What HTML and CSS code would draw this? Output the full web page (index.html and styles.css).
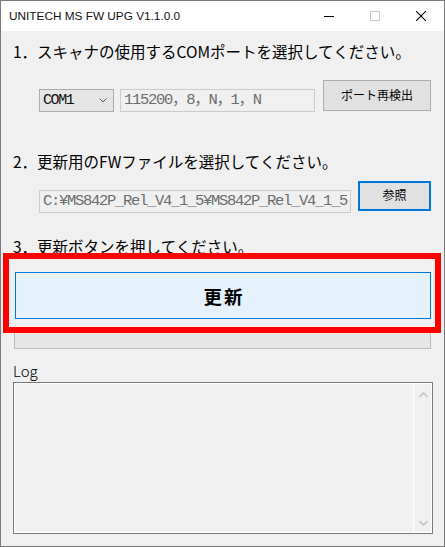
FILE: index.html
```html
<!DOCTYPE html>
<html lang="ja">
<head>
<meta charset="utf-8">
<title>UNITECH MS FW UPG V1.1.0.0</title>
<link rel="stylesheet" href="styles.css">
</head>
<body>
<div class="window">
  <div class="titlebar">
    <span class="title">UNITECH MS FW UPG V1.1.0.0</span>
    <div class="caption-btns">
      <div class="cap"><svg width="10" height="10" viewBox="0 0 10 10"><line x1="0" y1="5.5" x2="10" y2="5.5" stroke="#000" stroke-width="1"/></svg></div>
      <div class="cap"><svg width="10" height="10" viewBox="0 0 10 10"><rect x="0.5" y="0.5" width="9" height="9" fill="none" stroke="#cccccc" stroke-width="1"/></svg></div>
      <div class="cap"><svg width="10" height="10" viewBox="0 0 10 10"><path d="M0 0 L10 10 M10 0 L0 10" stroke="#000" stroke-width="1.1"/></svg></div>
    </div>
  </div>
  <div class="content">
    <p class="label l1">1．スキャナの使用するCOMポートを選択してください。</p>
    <div class="row row1">
      <div class="combo">
        <span class="combo-text">COM1</span>
        <svg class="combo-arrow" width="8" height="5" viewBox="0 0 8 5"><polyline points="0.5,0.5 4,4 7.5,0.5" fill="none" stroke="#606060" stroke-width="1"/></svg>
      </div>
      <div class="textbox tb-port">115200，8，N，1，N</div>
      <div class="btn btn-detect">ポート再検出</div>
    </div>
    <p class="label l2">2．更新用のFWファイルを選択してください。</p>
    <div class="row row2">
      <div class="textbox tb-file">C:¥MS842P_Rel_V4_1_5¥MS842P_Rel_V4_1_5</div>
      <div class="btn btn-browse">参照</div>
    </div>
    <p class="label l3">3．更新ボタンを押してください。</p>
    <div class="btn-update">更新</div>
    <div class="progress"></div>
    <div class="log-label">Log</div>
    <div class="log">
      <div class="log-area"></div>
      <div class="scroll">
        <svg width="9" height="6" viewBox="0 0 9 6"><polyline points="0.5,5 4.5,1 8.5,5" fill="none" stroke="#c4c4c4" stroke-width="1.6"/></svg>
        <svg width="9" height="6" viewBox="0 0 9 6"><polyline points="0.5,1 4.5,5 8.5,1" fill="none" stroke="#c4c4c4" stroke-width="1.6"/></svg>
      </div>
    </div>
  </div>
  <div class="highlight"></div>
</div>
</body>
</html>
```
FILE: styles.css
```css
html, body {
  margin: 0;
  padding: 0;
  background: #f0f0f0;
}
.window {
  position: relative;
  width: 445px;
  height: 547px;
  box-sizing: border-box;
  border: 1px solid #7a7a7a;
  background: #f0f0f0;
  display: flex;
  flex-direction: column;
  font-family: "Noto Sans CJK JP", sans-serif;
  color: #000;
}
.titlebar {
  height: 30px;
  background: #ffffff;
  display: flex;
  align-items: center;
  flex-shrink: 0;
}
.title {
  font-family: "Liberation Sans", Arial, sans-serif;
  font-size: 11.8px;
  font-weight: 400;
  padding-left: 8px;
  flex: 1;
  color: #111;
}
.caption-btns {
  display: flex;
  height: 30px;
}
.cap {
  width: 46px;
  height: 30px;
  display: flex;
  align-items: center;
  justify-content: center;
}
.cap svg { display: block; }
.content {
  padding: 10px 12px 0 12px;
  display: flex;
  flex-direction: column;
}
.label {
  margin: 0;
  font-size: 15.5px;
  line-height: 20px;
  height: 20px;
  white-space: nowrap;
}
.row {
  display: flex;
  align-items: flex-start;
}
.row1 { margin-top: 19px; padding-left: 26px; height: 32px; }
.l2 { margin-top: 39px; }
.row2 { margin-top: 10px; padding-left: 26px; height: 32px; }
.l3 { margin-top: 23px; }

.combo {
  width: 75px;
  height: 23px;
  margin-top: 9px;
  box-sizing: border-box;
  border: 1px solid #acacac;
  background: #e5e5e5;
  display: flex;
  align-items: center;
  justify-content: space-between;
  padding: 0 6px 0 3px;
}
.combo-text {
  font-family: "Liberation Mono", monospace;
  font-size: 15px;
  letter-spacing: -1.4px;
  line-height: 21px;
  color: #111;
}
.combo-arrow { display: block; }
.textbox {
  height: 23px;
  margin-top: 9px;
  box-sizing: border-box;
  border: 1px solid #cccccc;
  background: #f0f0f0;
  color: #6d6d6d;
  font-family: "Liberation Mono", "Noto Sans CJK JP", monospace;
  font-size: 15.5px;
  letter-spacing: -1.3px;
  line-height: 21px;
  padding-left: 3px;
  white-space: nowrap;
  overflow: hidden;
}
.tb-port { width: 195px; margin-left: 6px; }
.tb-file { width: 312px; }
.btn {
  box-sizing: border-box;
  background: #e1e1e1;
  display: flex;
  align-items: center;
  justify-content: center;
  font-size: 12px;
  white-space: nowrap;
}
.btn-detect {
  width: 108px;
  height: 31px;
  margin-left: 8px;
  border: 1px solid #adadad;
  padding-bottom: 2px;
}
.btn-browse {
  width: 73px;
  height: 30px;
  margin-left: 7px;
  border: 2px solid #0078d7;
  padding-bottom: 3px;
}
.btn-update {
  margin-top: 16px;
  margin-left: 2px;
  width: 416px;
  height: 47px;
  box-sizing: border-box;
  border: 1px solid #0078d7;
  background: #e5f1fb;
  display: flex;
  align-items: center;
  justify-content: center;
  font-size: 18.5px;
  font-weight: 700;
  letter-spacing: 2px;
  padding-left: 2px;
}
.progress {
  margin-top: 8px;
  margin-left: 1px;
  width: 417px;
  height: 22px;
  box-sizing: border-box;
  border: 1px solid #bcbcbc;
  background: #e6e6e6;
}
.log-label {
  margin-top: 12px;
  font-size: 15px;
  font-weight: 300;
  line-height: 20px;
  height: 20px;
}
.log {
  margin-top: 1px;
  width: 420px;
  height: 152px;
  box-sizing: border-box;
  border: 1px solid #7a7a7a;
  box-shadow: inset 0 0 0 1px #ffffff;
  background: #f0f0f0;
  display: flex;
}
.log-area { flex: 1; }
.scroll {
  width: 18px;
  border-left: 1px solid #ffffff;
  display: flex;
  flex-direction: column;
  align-items: center;
  justify-content: space-between;
  padding: 9px 0 7px 0;
}
.scroll svg { display: block; }
.highlight {
  position: absolute;
  left: 2px;
  top: 252px;
  width: 438px;
  height: 80px;
  box-sizing: border-box;
  border: 6px solid #ff0000;
}
```
